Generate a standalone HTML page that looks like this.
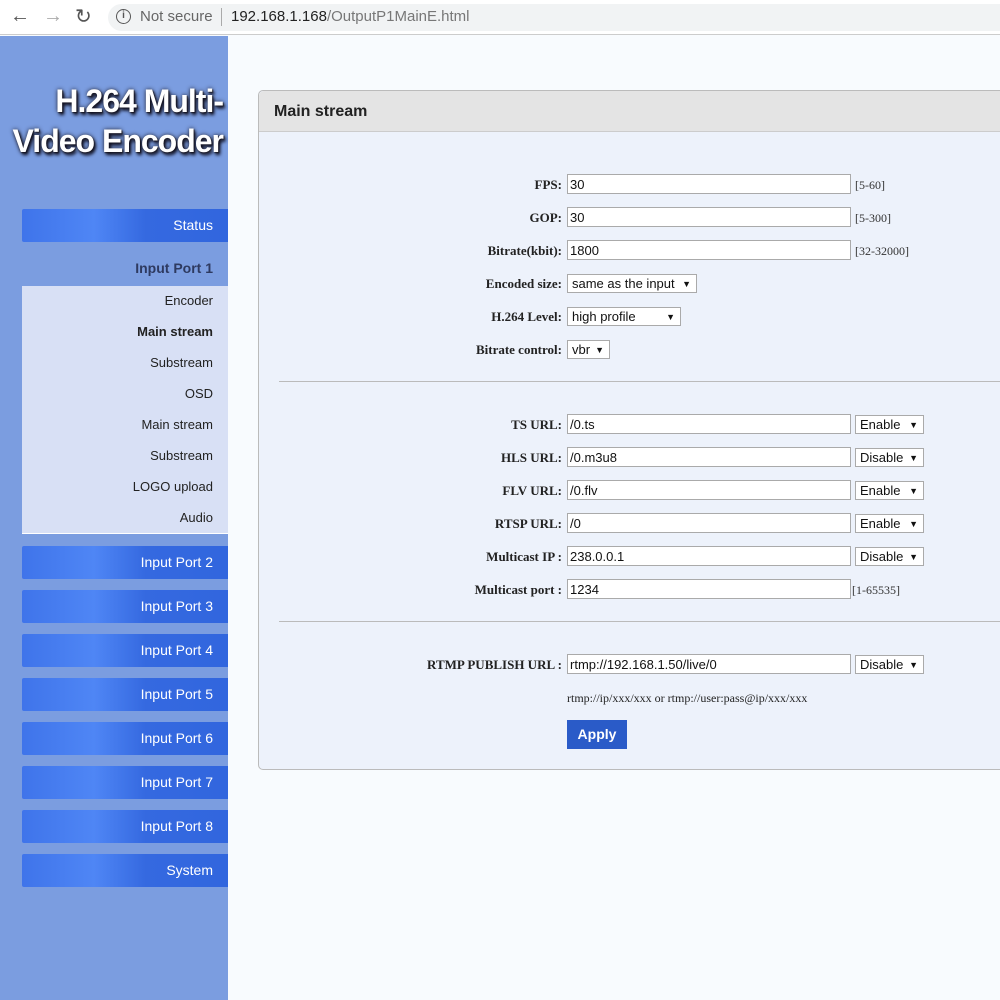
<!DOCTYPE html>
<html><head><style>
*{margin:0;padding:0;box-sizing:border-box}
body{width:1000px;height:1000px;overflow:hidden;background:#f8fbfe;font-family:"Liberation Sans",sans-serif;position:relative}
.a{position:absolute}
.bar{left:0;top:0;width:1000px;height:35px;background:#fff;border-bottom:1px solid #ccc}
.url{left:108px;top:4px;width:892px;height:27px;background:#f1f3f4;border-radius:14px 0 0 14px}
.side{left:0;top:36px;width:228px;height:964px;background:#7b9de0}
.btn{left:22px;width:206px;height:33px;background:linear-gradient(90deg,#3f74ea 0%,#4f86f5 35%,#3569e0 60%,#3166de 100%);color:#fff;font-size:14px;text-align:right;padding-right:15px;line-height:33px;border-radius:2px 0 0 2px}
.sub{left:22px;top:286px;width:206px;height:248px;background:#d8e0f5;border-bottom:1px solid #fff}
.si{right:15px;font-size:13px;color:#222;text-align:right}
.lab{right:438px;font-family:"Liberation Serif",serif;font-weight:bold;font-size:13px;color:#222;text-align:right}
.inp{left:567px;width:284px;height:20px;background:#fff;border:1px solid #aaa;font-size:13px;padding-left:2px;line-height:20px;color:#111}
.sel{height:19px;background:#fff;border:1px solid #aaa;font-size:13px;padding-left:4px;line-height:17px;color:#111}
.sel span{position:absolute;right:5px;font-size:9px;top:1px}
.rng{left:855px;font-family:"Liberation Serif",serif;font-size:12px;color:#333}
.hr{left:279px;width:721px;height:1px;background:#bbb}
</style></head><body>
<div class="a bar"></div>
<div class="a url"></div>
<div class="a" style="left:10px;top:5px;font-size:20px;color:#555">&#8592;</div>
<div class="a" style="left:43px;top:5px;font-size:20px;color:#aaa">&#8594;</div>
<div class="a" style="left:75px;top:4px;font-size:20px;color:#555">&#8635;</div>
<div class="a" style="left:116px;top:9px;width:15px;height:15px;border:1.5px solid #555;border-radius:50%;font-size:10px;text-align:center;line-height:12px;color:#555;font-weight:bold">i</div>
<div class="a" style="left:140px;top:8px;font-size:15px;color:#666">Not secure</div>
<div class="a" style="left:221px;top:8px;width:1px;height:18px;background:#aaa"></div>
<div class="a" style="left:231px;top:8px;font-size:15px;color:#222">192.168.1.168<span style="color:#777">/OutputP1MainE.html</span></div>

<div class="a side"></div>
<div class="a" style="left:0px;top:81px;width:223px;text-align:right;font-size:32px;font-weight:bold;color:#fff;line-height:40px;letter-spacing:-1px;text-shadow:2px 3px 3px #112,0 0 4px #223,1px 1px 1px #333">H.264 Multi-<br>Video Encoder</div>
<div class="a btn" style="top:209px">Status</div>
<div class="a" style="left:22px;top:260px;width:191px;text-align:right;font-size:14px;font-weight:bold;color:#2e3a60">Input Port 1</div>
<div class="a sub">
<div class="a si" style="top:7px">Encoder</div>
<div class="a si" style="top:38px;font-weight:bold">Main stream</div>
<div class="a si" style="top:69px">Substream</div>
<div class="a si" style="top:100px">OSD</div>
<div class="a si" style="top:131px">Main stream</div>
<div class="a si" style="top:162px">Substream</div>
<div class="a si" style="top:193px">LOGO upload</div>
<div class="a si" style="top:224px">Audio</div>
</div>
<div class="a btn" style="top:546px">Input Port 2</div>
<div class="a btn" style="top:590px">Input Port 3</div>
<div class="a btn" style="top:634px">Input Port 4</div>
<div class="a btn" style="top:678px">Input Port 5</div>
<div class="a btn" style="top:722px">Input Port 6</div>
<div class="a btn" style="top:766px">Input Port 7</div>
<div class="a btn" style="top:810px">Input Port 8</div>
<div class="a btn" style="top:854px">System</div>

<div class="a" style="left:258px;top:90px;width:760px;height:680px;background:#edf2fb;border:1px solid #bbb;border-radius:5px"></div>
<div class="a" style="left:259px;top:91px;width:741px;height:41px;background:#e4e4e4;border-bottom:1px solid #ccc;border-radius:5px 0 0 0"></div>
<div class="a" style="left:274px;top:103px;font-size:16px;font-weight:bold;color:#222">Main stream</div>

<div class="a lab" style="top:177px">FPS:</div><div class="a inp" style="top:174px">30</div><div class="a rng" style="top:178px">[5-60]</div>
<div class="a lab" style="top:210px">GOP:</div><div class="a inp" style="top:207px">30</div><div class="a rng" style="top:211px">[5-300]</div>
<div class="a lab" style="top:243px">Bitrate(kbit):</div><div class="a inp" style="top:240px">1800</div><div class="a rng" style="top:244px">[32-32000]</div>
<div class="a lab" style="top:276px">Encoded size:</div><div class="a sel" style="left:567px;top:274px;width:130px">same as the input<span>&#9660;</span></div>
<div class="a lab" style="top:309px">H.264 Level:</div><div class="a sel" style="left:567px;top:307px;width:114px">high profile<span>&#9660;</span></div>
<div class="a lab" style="top:342px">Bitrate control:</div><div class="a sel" style="left:567px;top:340px;width:43px">vbr<span>&#9660;</span></div>
<div class="a hr" style="top:381px"></div>

<div class="a lab" style="top:417px">TS URL:</div><div class="a inp" style="top:414px">/0.ts</div><div class="a sel" style="left:855px;top:415px;width:69px">Enable<span>&#9660;</span></div>
<div class="a lab" style="top:450px">HLS URL:</div><div class="a inp" style="top:447px">/0.m3u8</div><div class="a sel" style="left:855px;top:448px;width:69px">Disable<span>&#9660;</span></div>
<div class="a lab" style="top:483px">FLV URL:</div><div class="a inp" style="top:480px">/0.flv</div><div class="a sel" style="left:855px;top:481px;width:69px">Enable<span>&#9660;</span></div>
<div class="a lab" style="top:516px">RTSP URL:</div><div class="a inp" style="top:513px">/0</div><div class="a sel" style="left:855px;top:514px;width:69px">Enable<span>&#9660;</span></div>
<div class="a lab" style="top:549px">Multicast IP :</div><div class="a inp" style="top:546px">238.0.0.1</div><div class="a sel" style="left:855px;top:547px;width:69px">Disable<span>&#9660;</span></div>
<div class="a lab" style="top:582px">Multicast port :</div><div class="a inp" style="top:579px">1234</div><div class="a rng" style="left:852px;top:583px">[1-65535]</div>
<div class="a hr" style="top:621px"></div>

<div class="a lab" style="top:657px">RTMP PUBLISH URL :</div><div class="a inp" style="top:654px">rtmp://192.168.1.50/live/0</div><div class="a sel" style="left:855px;top:655px;width:69px">Disable<span>&#9660;</span></div>
<div class="a" style="left:567px;top:691px;font-family:'Liberation Serif',serif;font-size:12px;color:#222">rtmp://ip/xxx/xxx or rtmp://user:pass@ip/xxx/xxx</div>
<div class="a" style="left:567px;top:720px;width:60px;height:29px;background:#2a5bc8;color:#fff;font-weight:bold;font-size:14px;text-align:center;line-height:29px">Apply</div>
</body></html>
